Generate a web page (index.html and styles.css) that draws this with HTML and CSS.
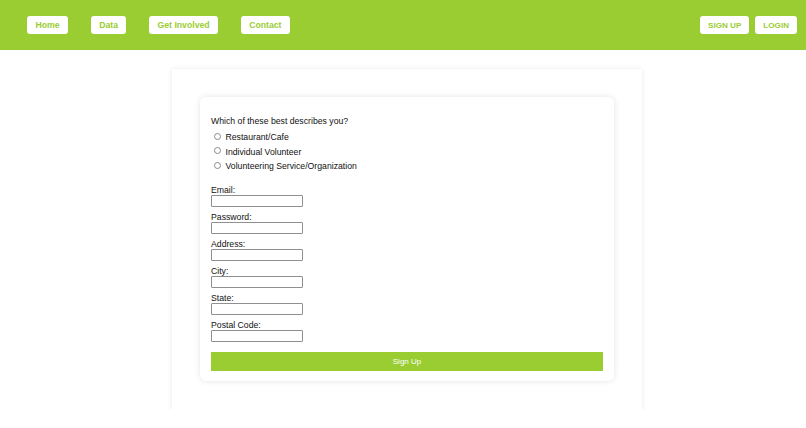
FILE: index.html
```html
<!DOCTYPE html>
<html>
<head>
<meta charset="utf-8">
<link rel="stylesheet" href="styles.css">
</head>
<body>
<header class="topbar">
  <nav class="nav-left">
    <a class="nav-btn" href="#">Home</a>
    <a class="nav-btn" href="#">Data</a>
    <a class="nav-btn" href="#">Get Involved</a>
    <a class="nav-btn" href="#">Contact</a>
  </nav>
  <nav class="nav-right">
    <a class="nav-btn nav-btn-small" href="#">SIGN UP</a>
    <a class="nav-btn nav-btn-small" href="#">LOGIN</a>
  </nav>
</header>
<main class="outer">
  <form class="inner">
    <p class="question">Which of these best describes you?</p>
    <label class="radio-row"><input type="radio" name="kind" class="radio"><span>Restaurant/Cafe</span></label>
    <label class="radio-row"><input type="radio" name="kind" class="radio"><span>Individual Volunteer</span></label>
    <label class="radio-row"><input type="radio" name="kind" class="radio"><span>Volunteering Service/Organization</span></label>
    <div class="fields">
      <label class="field"><span class="field-label">Email:</span><input class="text-input" type="text"></label>
      <label class="field"><span class="field-label">Password:</span><input class="text-input" type="password"></label>
      <label class="field"><span class="field-label">Address:</span><input class="text-input" type="text"></label>
      <label class="field"><span class="field-label">City:</span><input class="text-input" type="text"></label>
      <label class="field"><span class="field-label">State:</span><input class="text-input" type="text"></label>
      <label class="field"><span class="field-label">Postal Code:</span><input class="text-input" type="text"></label>
    </div>
    <button class="submit" type="button">Sign Up</button>
  </form>
</main>
</body>
</html>
```

FILE: styles.css
```css
* { box-sizing: border-box; }
html, body { margin: 0; padding: 0; background: #fff; }
body {
  font-family: "Liberation Sans", Arial, sans-serif;
  font-size: 8.7px;
  color: #111;
}
.topbar {
  height: 50px;
  background: #9acd32;
  display: flex;
  align-items: center;
  justify-content: space-between;
  padding: 0 9px 0 27px;
}
.nav-left, .nav-right { display: flex; align-items: center; }
.nav-left { gap: 22.5px; }
.nav-right { gap: 6px; }
.nav-btn {
  display: inline-flex;
  align-items: center;
  justify-content: center;
  height: 18px;
  padding: 0 8.5px;
  background: #fff;
  color: #9acd32;
  font-weight: bold;
  font-size: 8.7px;
  text-decoration: none;
  border-radius: 3px;
}
.nav-btn-small {
  font-size: 8.1px;
  padding: 0 8px;
}
.outer {
  width: 470px;
  margin: 19px 0 0 172px;
  padding: 28px 28px 29px;
  background: #fff;
  box-shadow: 0 0 5px rgba(0,0,0,0.09);
}
.inner {
  display: flex;
  flex-direction: column;
  padding: 19px 11px 10px;
  border-radius: 6px;
  box-shadow: 0 0 6px rgba(0,0,0,0.11);
  background: #fff;
}
.question {
  margin: 0 0 4px;
  line-height: 10px;
}
.radio-row {
  display: flex;
  align-items: center;
  height: 14.5px;
  line-height: 10px;
}
.radio {
  -webkit-appearance: none;
  appearance: none;
  width: 7px;
  height: 7px;
  margin: 0 4.5px 0 3px;
  border: 1px solid #8a8a8a;
  border-radius: 50%;
  background: #fff;
  position: relative;
  top: -1px;
}
.fields {
  display: flex;
  flex-direction: column;
  gap: 5px;
  margin-top: 11px;
}
.field { display: flex; flex-direction: column; align-items: flex-start; }
.field-label { line-height: 10px; }
.text-input {
  width: 92px;
  height: 12px;
  margin: 0;
  padding: 0;
  border: 1px solid #8f8f8f;
  border-radius: 1px;
  background: #fff;
}
.submit {
  margin-top: 10px;
  height: 19px;
  width: 100%;
  border: 0;
  padding: 0;
  background: #9acd32;
  color: #fff;
  font-family: "Liberation Sans", Arial, sans-serif;
  font-size: 8px;
}
```
